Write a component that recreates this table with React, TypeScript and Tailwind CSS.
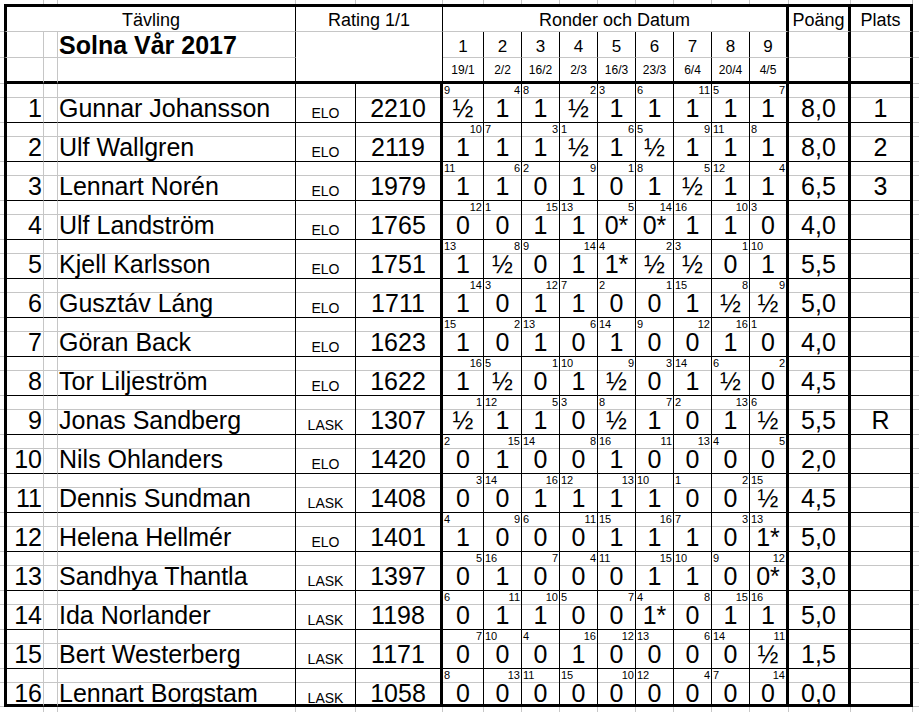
import React from "react";

type Player = [number, string, string, number, string, string, string];

// [nr, namn, lista, rating, poäng, plats, partier]  (< = motståndare till vänster, > = till höger)
const players: Player[] = [
  [1, "Gunnar Johansson", "ELO", 2210, "8,0", "1", "9<½ 4>1 8<1 2>½ 3<1 6<1 11>1 5<1 7>1"],
  [2, "Ulf Wallgren", "ELO", 2119, "8,0", "2", "10>1 7<1 3>1 1<½ 6>1 5<½ 9>1 11<1 8<1"],
  [3, "Lennart Norén", "ELO", 1979, "6,5", "3", "11<1 6>1 2<0 9>1 1>0 8<1 5>½ 12<1 4>1"],
  [4, "Ulf Landström", "ELO", 1765, "4,0", "", "12>0 1<0 15>1 13<1 5>0* 14>0* 16<1 10>1 3<0"],
  [5, "Kjell Karlsson", "ELO", 1751, "5,5", "", "13<1 8>½ 9<0 14>1 4<1* 2>½ 3<½ 1>0 10<1"],
  [6, "Gusztáv Láng", "ELO", 1711, "5,0", "", "14>1 3<0 12>1 7<1 2<0 1>0 15<1 8>½ 9>½"],
  [7, "Göran Back", "ELO", 1623, "4,0", "", "15<1 2>0 13<1 6>0 14<1 9<0 12>0 16>1 1<0"],
  [8, "Tor Liljeström", "ELO", 1622, "4,5", "", "16>1 5<½ 1>0 10<1 9>½ 3>0 14<1 6<½ 2>0"],
  [9, "Jonas Sandberg", "LASK", 1307, "5,5", "R", "1>½ 12<1 5>1 3<0 8<½ 7>1 2<0 13>1 6<½"],
  [10, "Nils Ohlanders", "ELO", 1420, "2,0", "", "2<0 15>1 14<0 8>0 16<1 11>0 13>0 4<0 5>0"],
  [11, "Dennis Sundman", "LASK", 1408, "4,5", "", "3>0 14<0 16>1 12<1 13>1 10<1 1<0 2>0 15<½"],
  [12, "Helena Hellmér", "ELO", 1401, "5,0", "", "4<1 9>0 6<0 11>0 15<1 16>1 7<1 3>0 13<1*"],
  [13, "Sandhya Thantla", "LASK", 1397, "3,0", "", "5>0 16<1 7>0 4>0 11<0 15>1 10<1 9<0 12>0*"],
  [14, "Ida Norlander", "LASK", 1198, "5,0", "", "6<0 11>1 10>1 5<0 7>0 4<1* 8>0 15>1 16<1"],
  [15, "Bert Westerberg", "LASK", 1171, "1,5", "", "7>0 10<0 4<0 16>1 12>0 13<0 6>0 14<0 11>½"],
  [16, "Lennart Borgstam", "LASK", 1058, "0,0", "", "8<0 13>0 11<0 15<0 10>0 12<0 4>0 7<0 14>0"],
];

const rounds = [
  ["1", "19/1"], ["2", "2/2"], ["3", "16/2"], ["4", "2/3"], ["5", "16/3"],
  ["6", "23/3"], ["7", "6/4"], ["8", "20/4"], ["9", "4/5"],
];

const parse = (s: string) =>
  s.split(" ").map((t) => {
    const m = t.match(/^(\d+)([<>])(.+)$/)!;
    return { opp: m[1], left: m[2] === "<", res: m[3] };
  });

const sub = "h-[14px] border-b border-b-[#c6c6c6]";
const big = "text-[25px] leading-[21px] whitespace-nowrap";

const DataRow: React.FC<{ p: Player; last: boolean }> = ({ p, last }) => {
  const [nr, name, list, rating, pts, place, games] = p;
  const bb = last ? "border-b-[3px] border-b-black" : "border-b border-b-black";
  return (
    <>
      <div className="border-b border-b-[#c6c6c6]"><div className={sub} /></div>
      <div className={`border-l-[3px] border-l-black border-r border-r-[#c6c6c6] ${bb}`}>
        <div className={sub} />
        <div className={`${big} text-right pr-px`}>{nr}</div>
      </div>
      <div className={`border-r border-r-[#c6c6c6] ${bb}`}><div className={sub} /></div>
      <div className={`border-r border-r-black ${bb}`}>
        <div className={sub} />
        <div className={`${big} pl-px`}>{name}</div>
      </div>
      <div className={`border-r border-r-black ${bb}`}>
        <div className={sub} />
        <div className="pt-[8px] text-center text-[14px] leading-[14px]">{list}</div>
      </div>
      <div className={`border-r-[3px] border-r-black ${bb}`}>
        <div className={sub} />
        <div className={`${big} text-center`}>{rating}</div>
      </div>
      {parse(games).map((g, i) => (
        <div key={i} className={`${i === 8 ? "border-r-[3px]" : "border-r"} border-r-black ${bb}`}>
          <div className={`${sub} flex px-px text-[11px] leading-[12px] ${g.left ? "justify-start" : "justify-end"}`}>
            {g.opp}
          </div>
          <div className={`${big} text-center`}>{g.res}</div>
        </div>
      ))}
      <div className={`border-r-[3px] border-r-black ${bb}`}>
        <div className={sub} />
        <div className={`${big} text-center`}>{pts}</div>
      </div>
      <div className={`border-r-[3px] border-r-black ${bb}`}>
        <div className={sub} />
        <div className={`${big} text-center`}>{place}</div>
      </div>
      <div className="border-b border-b-[#c6c6c6]"><div className={sub} /></div>
    </>
  );
};

const GhostRow: React.FC = () => (
  <>
    {Array.from({ length: 18 }).map((_, i) => (
      <div key={i} className={i > 0 && i < 17 ? "border-r border-r-[#c6c6c6]" : ""} />
    ))}
  </>
);

const hdr = "text-[18px] leading-[24px] pt-px text-center whitespace-nowrap";

export default function App() {
  return (
    <div className="w-[919px] h-[712px] overflow-hidden bg-white text-black font-['Liberation_Sans',Arial,sans-serif] grid grid-cols-[4px_40px_14px_238px_60px_87px_41px_38px_38px_38px_38px_38px_38px_38px_39px_62px_62px_6px] grid-rows-[4px_28px_26px_26px_repeat(15,39px)_38px_5px]">
      <GhostRow />

      {/* rubrikrad 1 */}
      <div className="border-b border-b-[#c6c6c6]" />
      <div className={`col-span-3 border-t-[3px] border-t-black border-l-[3px] border-l-black border-r border-r-black border-b border-b-[#c6c6c6] ${hdr}`}>
        Tävling
      </div>
      <div className={`col-span-2 border-t-[3px] border-t-black border-r border-r-black border-b border-b-[#c6c6c6] ${hdr}`}>
        Rating 1/1
      </div>
      <div className={`col-span-9 border-t-[3px] border-t-black border-r-[3px] border-r-black border-b border-b-[#c6c6c6] ${hdr}`}>
        Ronder och Datum
      </div>
      <div className={`border-t-[3px] border-t-black border-r-[3px] border-r-black border-b border-b-[#c6c6c6] ${hdr}`}>
        Poäng
      </div>
      <div className={`border-t-[3px] border-t-black border-r-[3px] border-r-black border-b border-b-[#c6c6c6] ${hdr}`}>
        Plats
      </div>
      <div className="border-b border-b-[#c6c6c6]" />

      {/* rubrikrad 2 */}
      <div className="border-b border-b-[#c6c6c6]" />
      <div className="border-l-[3px] border-l-black border-r border-r-[#c6c6c6] border-b border-b-[#c6c6c6]" />
      <div className="border-r border-r-[#c6c6c6] border-b border-b-[#c6c6c6]" />
      <div className="border-r border-r-black border-b border-b-[#c6c6c6] pl-px pt-[1px] text-[25px] leading-[25px] font-bold whitespace-nowrap">
        Solna Vår 2017
      </div>
      <div className="col-span-2 row-span-2 border-r border-r-black border-b-[3px] border-b-black" />
      {rounds.map(([n], i) => (
        <div key={n} className={`${i === 8 ? "border-r-[3px]" : "border-r"} border-r-black border-b border-b-[#c6c6c6] pt-[2px] text-center text-[17px] leading-[25px]`}>
          {n}
        </div>
      ))}
      <div className="border-r-[3px] border-r-black border-b border-b-[#c6c6c6]" />
      <div className="border-r-[3px] border-r-black border-b border-b-[#c6c6c6]" />
      <div className="border-b border-b-[#c6c6c6]" />

      {/* rubrikrad 3 */}
      <div className="border-b border-b-[#c6c6c6]" />
      <div className="border-l-[3px] border-l-black border-r border-r-[#c6c6c6] border-b-[3px] border-b-black" />
      <div className="border-r border-r-[#c6c6c6] border-b-[3px] border-b-black" />
      <div className="border-r border-r-black border-b-[3px] border-b-black" />
      {rounds.map(([n, d], i) => (
        <div key={n} className={`${i === 8 ? "border-r-[3px]" : "border-r"} border-r-black border-b-[3px] border-b-black pt-px text-center text-[12px] leading-[23px]`}>
          {d}
        </div>
      ))}
      <div className="border-r-[3px] border-r-black border-b-[3px] border-b-black" />
      <div className="border-r-[3px] border-r-black border-b-[3px] border-b-black" />
      <div className="border-b border-b-[#c6c6c6]" />

      {players.map((p, i) => (
        <DataRow key={p[0]} p={p} last={i === players.length - 1} />
      ))}

      <GhostRow />
    </div>
  );
}
